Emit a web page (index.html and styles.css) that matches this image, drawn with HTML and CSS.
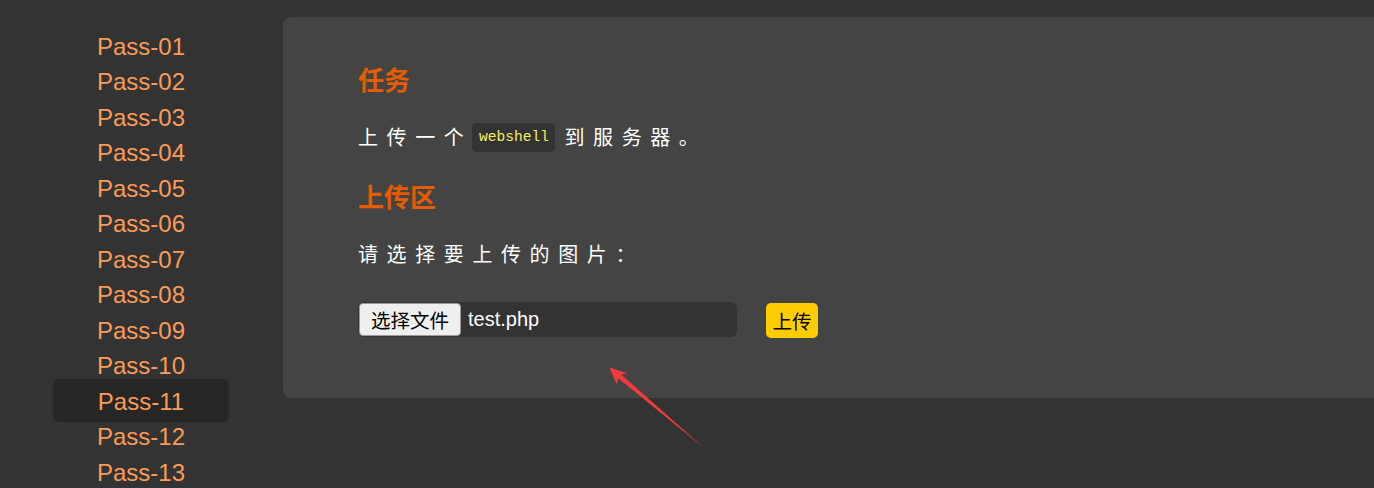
FILE: index.html
```html
<!DOCTYPE html>
<html lang="zh-CN">
<head>
<meta charset="utf-8">
<title>Upload Labs</title>
<link rel="stylesheet" href="styles.css">
</head>
<body>
<div class="page">
  <aside class="sidebar">
    <ul class="nav">
      <li><a href="#">Pass-01</a></li>
      <li><a href="#">Pass-02</a></li>
      <li><a href="#">Pass-03</a></li>
      <li><a href="#">Pass-04</a></li>
      <li><a href="#">Pass-05</a></li>
      <li><a href="#">Pass-06</a></li>
      <li><a href="#">Pass-07</a></li>
      <li><a href="#">Pass-08</a></li>
      <li><a href="#">Pass-09</a></li>
      <li><a href="#">Pass-10</a></li>
      <li><a href="#" class="active">Pass-11</a></li>
      <li><a href="#">Pass-12</a></li>
      <li><a href="#">Pass-13</a></li>
    </ul>
  </aside>
  <main class="panel">
    <h2 class="title">任务</h2>
    <p class="text">上传一个<code class="code">webshell</code>到服务器。</p>
    <h2 class="title">上传区</h2>
    <p class="text">请选择要上传的图片：</p>
    <form class="upload-row">
      <div class="file-input">
        <span class="file-btn">选择文件</span>
        <span class="file-name">test.php</span>
      </div>
      <button type="button" class="submit">上传</button>
    </form>
  </main>
</div>
<svg class="arrow" width="1374" height="488" viewBox="0 0 1374 488">
  <polygon points="609.5,367.5 627,373 621.5,374.8 703.5,447.5 618.5,378.5 616.5,384" fill="#f23a3a"/>
</svg>
</body>
</html>
```

FILE: styles.css
```css
html, body {
  margin: 0;
  padding: 0;
  height: 488px;
  overflow: hidden;
  background: #333333;
}

body {
  position: relative;
  font-family: "Liberation Sans", Arial, "Noto Sans CJK SC", sans-serif;
}

.page {
  display: flex;
  align-items: flex-start;
}

.sidebar {
  width: 283px;
  flex: none;
  padding-top: 28.5px;
  padding-left: 53px;
  box-sizing: border-box;
}

.nav {
  list-style: none;
  margin: 0;
  padding: 0;
  width: 176px;
}

.nav li {
  height: 35.5px;
}

.nav a {
  position: relative;
  display: block;
  height: 35.5px;
  line-height: 35.5px;
  text-align: center;
  color: #fb9b57;
  font-size: 24px;
  text-decoration: none;
}

.nav a.active::before {
  content: "";
  position: absolute;
  left: 0;
  right: 0;
  top: -4.5px;
  bottom: -2.5px;
  background: #262626;
  border-radius: 6px;
  z-index: -1;
}

.nav a.active {
  z-index: 0;
}

.panel {
  flex: 1;
  margin-top: 17px;
  background: #444444;
  border-radius: 8px 0 0 8px;
  padding: 47px 0 60px 75px;
}

.title {
  margin: 0;
  font-family: "Noto Sans CJK SC", sans-serif;
  font-size: 26px;
  line-height: 30px;
  font-weight: 700;
  color: #e65c00;
}

.text {
  margin: 28px 0 29px;
  font-family: "Noto Sans CJK SC", sans-serif;
  font-size: 20px;
  line-height: 30px;
  letter-spacing: 8.6px;
  color: #ffffff;
}

.text:last-of-type {
  margin-bottom: 33px;
}

.code {
  display: inline-block;
  vertical-align: top;
  margin-top: 1px;
  margin-right: 9px;
  padding: 4px 6.5px;
  line-height: 21px;
  font-family: "Liberation Mono", "DejaVu Sans Mono", monospace;
  font-size: 14.6px;
  letter-spacing: 0;
  color: #f2f25c;
  background: #333333;
  border-radius: 5px;
}

.upload-row {
  display: flex;
  align-items: flex-start;
  gap: 29px;
  margin: 0;
}

.file-input {
  width: 379px;
  height: 35px;
  box-sizing: border-box;
  padding: 1px;
  background: #333333;
  border-radius: 6px;
  display: flex;
  align-items: center;
  gap: 7px;
}

.file-btn {
  height: 33px;
  width: 102px;
  box-sizing: border-box;
  display: flex;
  align-items: center;
  justify-content: center;
  background: #efefef;
  border: 1px solid #9a9a9a;
  border-radius: 4px;
  color: #000000;
  font-family: "Noto Sans CJK SC", sans-serif;
  font-size: 19.5px;
}

.file-name {
  color: #ffffff;
  font-size: 20px;
}

.submit {
  height: 35px;
  width: 52px;
  margin-top: 1px;
  padding: 0;
  border: none;
  border-radius: 5px;
  background: #ffcc00;
  color: #000000;
  font-family: "Noto Sans CJK SC", sans-serif;
  font-size: 19.5px;
  line-height: 35px;
}

.arrow {
  position: absolute;
  top: 0;
  left: 0;
  pointer-events: none;
}
```
